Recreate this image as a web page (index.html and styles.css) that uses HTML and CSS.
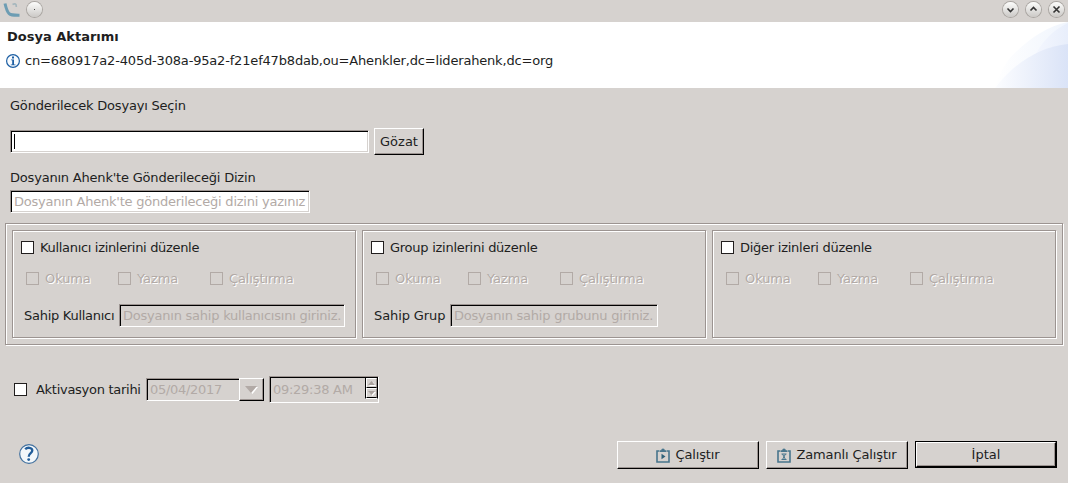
FILE: index.html
```
<!DOCTYPE html>
<html lang="tr">
<head>
<meta charset="utf-8">
<title>Dosya Aktarımı</title>
<link rel="stylesheet" href="styles.css">
</head>
<body>
<div class="window">
  <div class="titlebar">
    <svg class="logo" width="18" height="16" viewBox="0 0 18 16" fill="none"><path d="M2 1.500C2.800 5 4 9.500 6 11.500C7.500 13.300 9.500 13.200 16.500 13.200" stroke="#6d9db3" stroke-width="3"/><path d="M9.500 2.500C12 1.300 13.500 1.800 13.300 5" stroke="#a6b7bd" stroke-width="1.700"/></svg>
    <span class="orb orb-menu"><svg width="15" height="15"><rect x="7" y="7" width="1" height="1"/></svg></span>
    <span class="spacer"></span>
    <span class="orb"><svg width="15" height="15"><path d="M4.500 6.500l3 3 3-3"/></svg></span>
    <span class="orb"><svg width="15" height="15"><path d="M4.500 8.500l3-3 3 3"/></svg></span>
    <span class="orb"><svg width="15" height="15"><path d="M4.500 4.500l6 6M10.500 4.500l-6 6"/></svg></span>
  </div>

  <header class="banner">
    <div class="banner-text">
      <h1 class="title">Dosya Aktarımı</h1>
      <div class="message">
        <svg width="14" height="14" viewBox="0 0 14 14"><circle cx="7" cy="7" r="6.400" fill="#f8fbfe" stroke="#1d5fa3" stroke-width="1.200"/><path d="M5 5.500H8V10.500H9.500V11.200H4.800V10.500H6.200V6.300H5Z" fill="#1d5fa3"/><rect x="6" y="2.500" width="2" height="2" fill="#1d5fa3"/></svg>
        <span class="dn">cn=680917a2-405d-308a-95a2-f21ef47b8dab,ou=Ahenkler,dc=liderahenk,dc=org</span>
      </div>
    </div>
    <svg class="swoosh" width="78" height="66" viewBox="0 0 78 66">
      <defs>
        <linearGradient id="g1"><stop offset="0" stop-color="#fff"/><stop offset="1" stop-color="#f0f5fd"/></linearGradient>
        <linearGradient id="g2"><stop offset="0" stop-color="#fcfdff"/><stop offset="1" stop-color="#dae3f7"/></linearGradient>
        <linearGradient id="g3"><stop offset="0" stop-color="#f4f7fe"/><stop offset="1" stop-color="#e8eefb"/></linearGradient>
      </defs>
      <path d="M5 66C12 44 20 35 28 28C42 15 58 4 78 0V66Z" fill="url(#g1)"/>
      <path d="M44 36C50 22 62 8 78 1V66H44Z" fill="url(#g3)"/>
      <path d="M5 66C25 40 50 25 78 22V66Z" fill="url(#g2)"/>
    </svg>
  </header>

  <main class="content">
    <div class="label label-file">Gönderilecek Dosyayı Seçin</div>
    <div class="row file-row">
      <div class="field field-file"><span class="caret"></span></div>
      <div class="button browse"><span>Gözat</span></div>
    </div>
    <div class="label label-dir">Dosyanın Ahenk'te Gönderileceği Dizin</div>
    <div class="field field-dir"><span>Dosyanın Ahenk'te gönderileceği dizini yazınız</span></div>

    <section class="etched groups">
      <div class="etched group">
        <div class="check heading heading-user"><i class="box"></i><span>Kullanıcı izinlerini düzenle</span></div>
        <div class="perms">
          <div class="check off"><i class="box"></i><span>Okuma</span></div>
          <div class="check off"><i class="box"></i><span>Yazma</span></div>
          <div class="check off"><i class="box"></i><span>Çalıştırma</span></div>
        </div>
        <div class="row owner"><span class="owner-label">Sahip Kullanıcı</span><div class="field disabled field-user"><span>Dosyanın sahip kullanıcısını giriniz.</span></div></div>
      </div>
      <div class="etched group">
        <div class="check heading"><i class="box"></i><span>Group izinlerini düzenle</span></div>
        <div class="perms">
          <div class="check off"><i class="box"></i><span>Okuma</span></div>
          <div class="check off"><i class="box"></i><span>Yazma</span></div>
          <div class="check off"><i class="box"></i><span>Çalıştırma</span></div>
        </div>
        <div class="row owner"><span class="owner-label owner-group">Sahip Grup</span><div class="field disabled field-group"><span>Dosyanın sahip grubunu giriniz.</span></div></div>
      </div>
      <div class="etched group">
        <div class="check heading"><i class="box"></i><span>Diğer izinleri düzenle</span></div>
        <div class="perms">
          <div class="check off"><i class="box"></i><span>Okuma</span></div>
          <div class="check off"><i class="box"></i><span>Yazma</span></div>
          <div class="check off"><i class="box"></i><span>Çalıştırma</span></div>
        </div>
      </div>
    </section>

    <div class="row activation">
      <div class="check activate"><i class="box"></i><span>Aktivasyon tarihi</span></div>
      <div class="field disabled date"><span>05/04/2017</span></div>
      <div class="button drop"><svg width="13" height="8"><path d="M2 1H13L7.500 8Z" fill="#fff"/><path d="M0 0H12L6 7Z" fill="#b2aaa6"/></svg></div>
      <div class="field disabled time">
        <span>09:29:38 AM</span>
        <div class="spinner">
          <i class="step"><svg width="8" height="5"><path d="M1 5H8L5 1Z" fill="#fff"/><path d="M0 4H7L3.500 0Z" fill="#aaa29e"/></svg></i>
          <i class="step"><svg width="8" height="5"><path d="M1 1H8L4.500 5Z" fill="#fff"/><path d="M0 0H7L3.500 4Z" fill="#aaa29e"/></svg></i>
        </div>
      </div>
    </div>
  </main>

  <footer class="actions">
    <svg class="help" width="20" height="20" viewBox="0 0 20 20"><circle cx="10" cy="10" r="9.300" fill="#f3f7fa" stroke="#42719f" stroke-width="1.200"/><path d="M6.200 5.200C8 3.200 13.300 3 13.300 6.600C13.300 9.200 9.700 9.200 9.700 12.700" fill="none" stroke="#235e9a" stroke-width="2.300"/><circle cx="9.700" cy="15.600" r="1.400" fill="#235e9a"/></svg>
    <span class="spacer"></span>
    <div class="button action"><svg width="14" height="16" viewBox="0 0 14 16"><path d="M3 4H1V15H13V4H11" fill="none" stroke="#48758c" stroke-width="1.600"/><path d="M3.500 5V3.300H5.200A1.800 1.800 0 0 1 8.800 3.300H10.500V5Z" fill="#48758c"/><path d="M5.500 6.800L9.500 9.500L5.500 12.200Z" fill="#2e6078"/></svg><span>Çalıştır</span></div>
    <div class="button action"><svg width="14" height="16" viewBox="0 0 14 16"><path d="M3 4H1V15H13V4H11" fill="none" stroke="#48758c" stroke-width="1.600"/><path d="M3.500 5V3.300H5.200A1.800 1.800 0 0 1 8.800 3.300H10.500V5Z" fill="#48758c"/><path d="M4.500 7H9.500M4.500 12.500H9.500M5.500 7L8.500 12.500M8.500 7L5.500 12.500" fill="none" stroke="#48758c"/></svg><span>Zamanlı Çalıştır</span></div>
    <div class="default-ring"><div class="button cancel"><span>İptal</span></div></div>
  </footer>
</div>
</body>
</html>
```
FILE: styles.css
```
* { box-sizing: border-box; }
body { margin: 0; background: #d6d2cf; font: 13px/16px "DejaVu Sans", sans-serif; color: #211e1e; }
svg { display: block; flex: none; }
span { white-space: nowrap; }
.window { width: 1068px; height: 483px; display: flex; flex-direction: column; overflow: hidden; }
.row { display: flex; align-items: center; }
.spacer { flex: 1; }

.titlebar { height: 22px; flex: none; display: flex; align-items: center; padding: 0 4px 3px 3px; gap: 8px; }
.orb { width: 15px; height: 15px; border-radius: 50%; background: linear-gradient(#fdfdfc, #cbc9c6); box-shadow: 0 0 0 1px #aaa6a2; }
.orb svg { fill: none; stroke: #333; stroke-width: 1.600; }
.orb-menu svg { fill: #444; stroke: none; }
.logo { margin-right: -2px; }

.banner { height: 66px; flex: none; background: #fff; display: flex; justify-content: space-between; }
.banner-text { padding: 7px 0 0 6px; }
.title { margin: 0 0 0 1px; font-size: 13px; line-height: 16px; font-weight: bold; }
.message { display: flex; align-items: center; gap: 5px; margin-top: 8px; }
.dn { letter-spacing: -0.178px; }

.content { padding: 0 5px; height: 353px; flex: none; }
.label { height: 16px; margin-left: 5px; letter-spacing: -0.2px; }
.label-file { margin-top: 10px; }
.file-row { margin: 14px 0 0 5px; height: 27px; gap: 5px; }
.label-dir { margin-top: 15px; }
.field { height: 23px; flex: none; background: #fff; border: 1px solid; border-color: #9c9491 #fff #fff #9c9491; box-shadow: inset 1px 1px #000, inset -1px -1px #d6d2cf; padding: 0 3px; display: flex; align-items: center; color: #b2aaa6; letter-spacing: -0.23px; }
.field.disabled { background: #d6d2cf; }
.field-file { width: 359px; }
.field-dir { width: 300px; margin: 4px 0 0 5px; }
.caret { width: 1px; height: 15px; background: #000; }
.button { display: flex; align-items: center; justify-content: center; border: 1px solid; border-color: #fff #000 #000 #fff; box-shadow: inset -1px -1px #9c9491; }
.browse { width: 50px; height: 27px; }

.etched { border: 1px solid #9c9491; box-shadow: 1px 1px #fff, inset 1px 1px #fff; }
.groups { margin-top: 10px; width: 1058px; height: 122px; padding: 6px; display: flex; gap: 6px; }
.group { width: 344px; height: 108px; padding: 8px 0 0 8px; flex: none; }
.check { display: flex; align-items: center; gap: 6px; height: 17px; }
.heading { letter-spacing: -0.26px; }
.heading-user { letter-spacing: -0.32px; }
.box { width: 13px; height: 13px; flex: none; background: #fff; border: 1px solid #211e1e; }
.off { width: 92px; color: #b2aaa6; letter-spacing: -0.1px; text-shadow: 1px 1px #fff; }
.off .box { background: none; border-color: #b2aaa6; }
.perms { display: flex; margin: 14px 0 0 5px; }
.owner { margin: 17px 0 0 3px; }
.owner-label { width: 95px; letter-spacing: -0.27px; }
.owner-group { width: 76px; letter-spacing: -0.1px; }
.field-user { width: 226px; }
.field-group { width: 208px; }

.activation { margin: 31px 0 0 9px; height: 27px; }
.activate { width: 132px; gap: 9px; letter-spacing: -0.28px; }
.date { width: 93px; border-right: 0; box-shadow: inset 1px 1px #000; letter-spacing: -0.3px; }
.drop { width: 25px; height: 23px; }
.time { width: 110px; height: 27px; margin-left: 5px; justify-content: space-between; padding-right: 0; box-shadow: inset 1px 1px #000; letter-spacing: -0.27px; }
.spinner { width: 13px; height: 22px; align-self: flex-start; border: 1px solid #000; border-bottom-color: #fff; }
.step { display: flex; align-items: center; justify-content: center; height: 10px; border: 1px solid; border-color: #fff #9c9491 #000 #fff; }

.actions { display: flex; align-items: flex-start; padding: 0 11px 0 19px; height: 42px; flex: none; }
.help { margin-top: 3px; }
.action { width: 142px; height: 28px; margin-right: 7px; gap: 5px; letter-spacing: -0.13px; }
.default-ring { width: 142px; height: 27px; background: #000; padding: 1px; }
.cancel { width: 140px; height: 25px; background: #d6d2cf; }
```
